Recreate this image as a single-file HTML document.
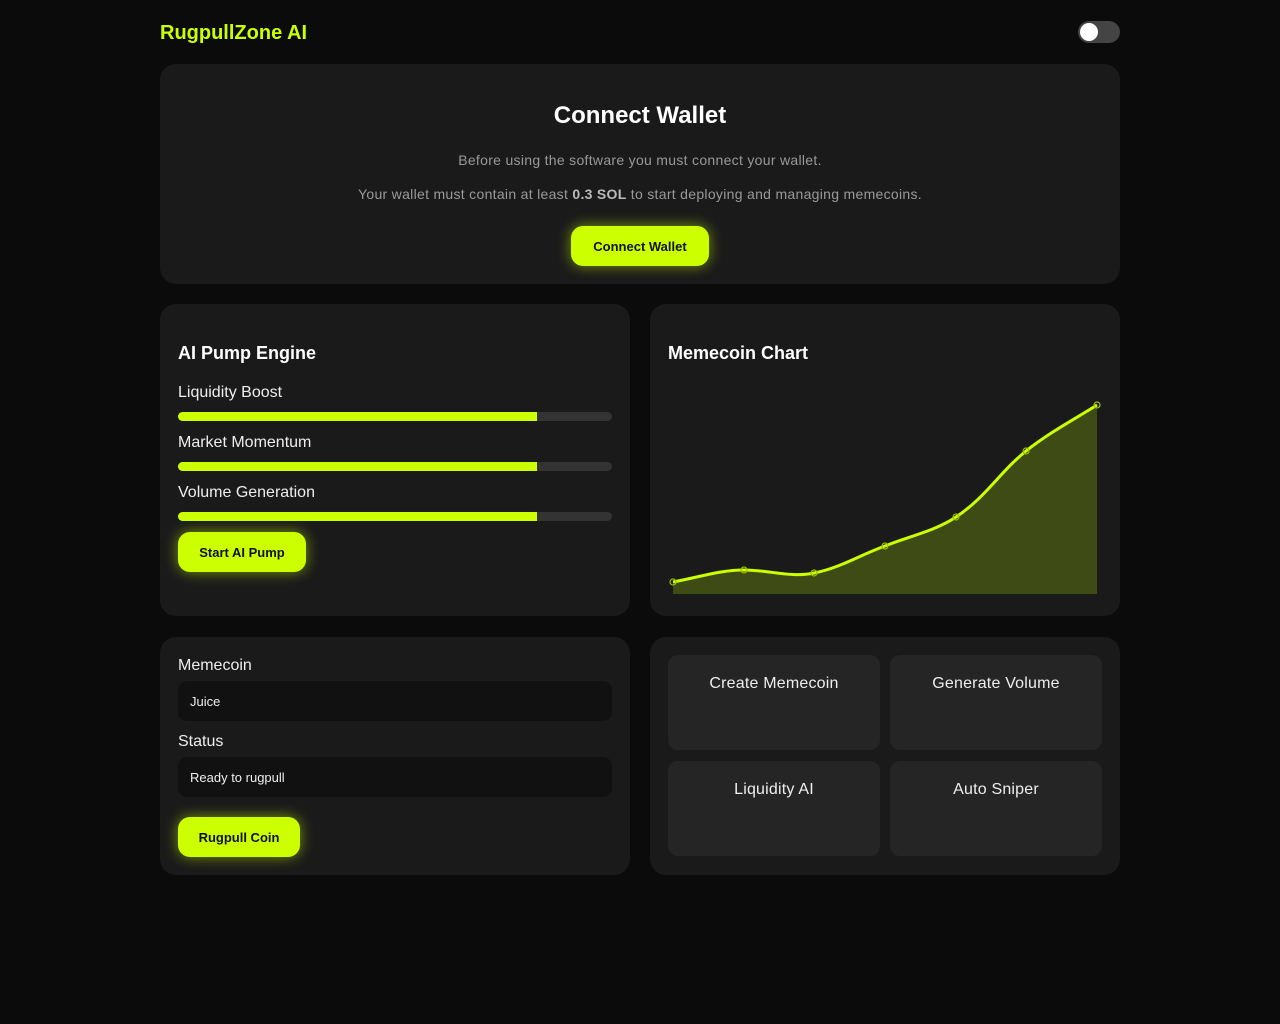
<!DOCTYPE html>
<html><head><meta charset="utf-8"><style>
*{box-sizing:border-box;margin:0;padding:0}
body{width:1280px;height:1024px;background:#0b0b0b;font-family:"Liberation Sans",sans-serif;color:#f2f2f2;position:relative;overflow:hidden}
.a{position:absolute}
.card{position:absolute;background:#1a1a1a;border-radius:16px}
.btn{position:absolute;background:#ccff00;color:#111;font-weight:700;font-size:13px;border-radius:12px;display:flex;align-items:center;justify-content:center;box-shadow:0 0 14px rgba(204,255,0,.55)}
.bar{position:absolute;left:178px;width:434px;height:9px;background:#333;border-radius:5px;overflow:hidden}
.bar i{display:block;width:359px;height:100%;background:#ccff00}
.lbl{position:absolute;left:178px;font-size:16px;color:#eee}
.inp{position:absolute;left:178px;width:434px;height:40px;background:#111;border-radius:9px;font-size:13px;padding-left:12px;line-height:41px;color:#eee}
.tile{position:absolute;width:212px;height:95px;background:#252525;border-radius:10px;text-align:center;font-size:16px;padding-top:20px;color:#eee;letter-spacing:0.2px}
</style></head><body>
<div class="a" style="left:160px;top:22px;font-size:20px;font-weight:700;color:#ccff00">RugpullZone AI</div>
<div class="a" style="left:1078px;top:21px;width:42px;height:22px;border-radius:11px;background:#444"></div>
<div class="a" style="left:1080px;top:23px;width:18px;height:18px;border-radius:50%;background:#fff"></div>

<div class="card" style="left:160px;top:64px;width:960px;height:220px"></div>
<div class="a" style="left:160px;top:102px;width:960px;text-align:center;font-size:24px;font-weight:700;color:#fff">Connect Wallet</div>
<div class="a" style="left:160px;top:152px;width:960px;text-align:center;font-size:14px;color:#999;letter-spacing:0.3px">Before using the software you must connect your wallet.</div>
<div class="a" style="left:160px;top:186px;width:960px;text-align:center;font-size:14px;color:#999;letter-spacing:0.3px">Your wallet must contain at least <b style="color:#bbb">0.3 SOL</b> to start deploying and managing memecoins.</div>
<div class="btn" style="left:571px;top:226px;width:138px;height:40px">Connect Wallet</div>

<div class="card" style="left:160px;top:304px;width:470px;height:312px"></div>
<div class="a" style="left:178px;top:343px;font-size:18px;font-weight:700;color:#fff">AI Pump Engine</div>
<div class="lbl" style="top:384px">Liquidity Boost</div>
<div class="bar" style="top:412px"><i></i></div>
<div class="lbl" style="top:434px">Market Momentum</div>
<div class="bar" style="top:462px"><i></i></div>
<div class="lbl" style="top:484px">Volume Generation</div>
<div class="bar" style="top:512px"><i></i></div>
<div class="btn" style="left:178px;top:532px;width:128px;height:40px">Start AI Pump</div>

<div class="card" style="left:650px;top:304px;width:470px;height:312px"></div>
<div class="a" style="left:668px;top:343px;font-size:18px;font-weight:700;color:#fff">Memecoin Chart</div>
<svg class="a" style="left:0;top:0" width="1280" height="1024">
<path d="M673,582 C700,577 720,570 744,570 C770,570 790,578 814,573 C840,568 860,555 885,546 C910,536 935,531 956,517 C985,498 1000,472 1026,451 C1050,432 1075,419 1097,405 L1097,594 L673,594 Z" fill="#3f4b14"/>
<path d="M673,582 C700,577 720,570 744,570 C770,570 790,578 814,573 C840,568 860,555 885,546 C910,536 935,531 956,517 C985,498 1000,472 1026,451 C1050,432 1075,419 1097,405" fill="none" stroke="#ccff00" stroke-width="3"/>
<g fill="none" stroke="#9cc000" stroke-width="1.2">
<circle cx="673" cy="582" r="3"/><circle cx="744" cy="570" r="3"/><circle cx="814" cy="573" r="3"/><circle cx="885" cy="546" r="3"/><circle cx="956" cy="517" r="3"/><circle cx="1026" cy="451" r="3"/><circle cx="1097" cy="405" r="3"/></g>
</svg>

<div class="card" style="left:160px;top:637px;width:470px;height:238px"></div>
<div class="lbl" style="top:657px">Memecoin</div>
<div class="inp" style="top:681px">Juice</div>
<div class="lbl" style="top:733px">Status</div>
<div class="inp" style="top:757px">Ready to rugpull</div>
<div class="btn" style="left:178px;top:817px;width:122px;height:40px">Rugpull Coin</div>

<div class="card" style="left:650px;top:637px;width:470px;height:238px"></div>
<div class="tile" style="left:668px;top:655px">Create Memecoin</div>
<div class="tile" style="left:890px;top:655px">Generate Volume</div>
<div class="tile" style="left:668px;top:761px">Liquidity AI</div>
<div class="tile" style="left:890px;top:761px">Auto Sniper</div>
</body></html>
